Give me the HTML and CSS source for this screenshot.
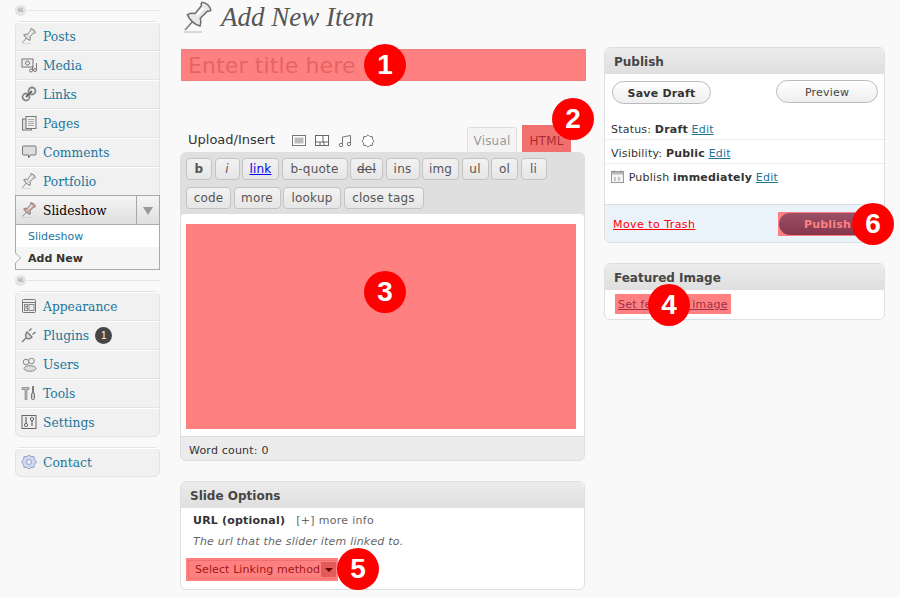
FILE: index.html
```html
<!DOCTYPE html>
<html lang="en">
<head>
    <meta charset="UTF-8">
    <title>Add New Item</title>
    <link rel="stylesheet" href="styles.css">
</head>
<body>

<svg class="defs" width="0" height="0">
    <symbol id="pin" viewBox="0 0 32 32">
        <path d="M2 31 H20" stroke="#ccc" stroke-width="1.500" fill="none"/>
        <g transform="translate(3 29) rotate(42)">
            <path d="M0 0 V-13" stroke="#888" stroke-width="1.800" fill="none"/>
            <path d="M-8.500 -13 Q0 -9 8.500 -13 Q7 -17 3.500 -19 L4 -29 Q6 -30 6 -32 Q0 -36 -6 -32 Q-6 -30 -4 -29 L-3.500 -19 Q-7 -17 -8.500 -13Z" fill="currentColor" stroke="#6e6e6e" stroke-width="1.500"/>
            <path d="M-1 -29 V-19" stroke="#fff" stroke-width="2" fill="none"/>
        </g>
    </symbol>
</svg>

<div class="page">

<aside class="sidebar">
    <div class="sep"><span class="sep-btn">«</span></div>
    <ul class="menu">
        <li><svg class="ico"><use href="#pin"/></svg><a href="#">Posts</a></li>
        <li><svg class="ico" viewBox="0 0 16 16"><rect x="1" y="2" width="11" height="8" fill="#eee" stroke="#777"/><circle cx="6.500" cy="6" r="2" fill="none" stroke="#777"/><circle cx="10" cy="13.500" r="1.500" fill="none" stroke="#777"/><circle cx="14" cy="13" r="1.500" fill="none" stroke="#777"/><path d="M11.500 13V9M15.500 13V6" stroke="#777"/></svg><a href="#">Media</a></li>
        <li><svg class="ico" viewBox="0 0 16 16"><circle cx="5" cy="11" r="3.500" fill="none" stroke="#888" stroke-width="1.800"/><circle cx="11" cy="5" r="3.500" fill="none" stroke="#888" stroke-width="1.800"/><path d="M5 11 L11 5" stroke="#666" stroke-width="1.800"/></svg><a href="#">Links</a></li>
        <li><svg class="ico" viewBox="0 0 16 16"><rect x="1.500" y="4" width="9" height="11" fill="#ddd" stroke="#777"/><rect x="5" y="1.500" width="10" height="12" fill="#f0f0f0" stroke="#777"/><path d="M7 4.500h6M7 6.500h6M7 8.500h6M7 10.500h6" stroke="#aaa"/></svg><a href="#">Pages</a></li>
        <li><svg class="ico" viewBox="0 0 16 16"><path d="M2.500 2 H14 Q15 2 15 3 V10 Q15 11 14 11 H9.500 L7.500 14 V11 H2.500 Q1.500 11 1.500 10 V3 Q1.500 2 2.500 2 Z" fill="#ddd" stroke="#777"/></svg><a href="#">Comments</a></li>
        <li><svg class="ico"><use href="#pin"/></svg><a href="#">Portfolio</a></li>
        <li class="menu-open">
            <div class="open-head">
                <svg class="ico ico-red"><use href="#pin"/></svg><span class="open-title">Slideshow</span>
                <span class="open-arrow"></span>
            </div>
            <ul class="submenu">
                <li><a href="#">Slideshow</a></li>
                <li class="current">Add New</li>
            </ul>
        </li>
    </ul>
    <div class="sep sep-mid"><span class="sep-btn">«</span></div>
    <ul class="menu">
        <li><svg class="ico" viewBox="0 0 16 16"><rect x="1.500" y="1.500" width="13" height="13" rx="1" fill="#eee" stroke="#777"/><path d="M1.500 4.500h13" stroke="#777"/><rect x="3.500" y="6.500" width="3" height="2" fill="none" stroke="#888"/><rect x="3.500" y="10" width="3" height="2.500" fill="none" stroke="#888"/><rect x="8" y="6.500" width="5" height="6" fill="none" stroke="#888"/></svg><a href="#">Appearance</a></li>
        <li><svg class="ico" viewBox="0 0 16 16"><path d="M1 15 L5 11 M6 5 L11 10 Q8 13 5.500 11 Q3.500 8 6 5 Z M8 4 L10.500 1.500 M11.500 7.500 L14.500 5" fill="#ddd" stroke="#777" stroke-width="1.300"/></svg><a href="#">Plugins</a><span class="count">1</span></li>
        <li><svg class="ico" viewBox="0 0 16 16"><circle cx="5" cy="6" r="2.800" fill="#eee" stroke="#888"/><circle cx="10.500" cy="5" r="2.800" fill="#eee" stroke="#888"/><ellipse cx="9" cy="12.500" rx="6" ry="2.800" fill="#ddd" stroke="#888"/></svg><a href="#">Users</a></li>
        <li><svg class="ico" viewBox="0 0 16 16"><path d="M1 2.500h7v2H6v10H4v-10H1z" fill="#bbb" stroke="#777" stroke-width=".6"/><path d="M12 1v7" stroke="#555" stroke-width="1.500"/><rect x="10.500" y="8" width="3" height="6.500" rx="1" fill="#ccc" stroke="#777"/></svg><a href="#">Tools</a></li>
        <li><svg class="ico" viewBox="0 0 16 16"><rect x="1" y="1.500" width="14" height="13" fill="#eee" stroke="#666"/><path d="M5 3v6M11 7v5" stroke="#666" stroke-width="1.200"/><circle cx="5" cy="11" r="1.600" fill="none" stroke="#666"/><circle cx="11" cy="5" r="1.600" fill="none" stroke="#666"/></svg><a href="#">Settings</a></li>
    </ul>
    <ul class="menu menu-last">
        <li><svg class="ico" viewBox="0 0 16 16"><path d="M8 1 L10 2.500 L13 2.500 L13.500 5.500 L15.500 8 L13.500 10.500 L13 13.500 L10 13.500 L8 15 L6 13.500 L3 13.500 L2.500 10.500 L.5 8 L2.500 5.500 L3 2.500 L6 2.500 Z" fill="#cfd8ec" stroke="#97a6cc"/><circle cx="8" cy="8" r="2.500" fill="#eef" stroke="#97a6cc"/></svg><a href="#">Contact</a></li>
    </ul>
</aside>

<main class="content">
    <div class="heading">
        <svg class="heading-ico"><use href="#pin"/></svg>
        <h2>Add New Item</h2>
    </div>

    <div class="columns">
        <div class="col-main">
            <div class="title-input">Enter title here</div>

            <div class="editor-top">
                <span class="upload">Upload/Insert</span>
                <svg class="media-ico" viewBox="0 0 14 14"><rect x=".5" y="1.500" width="13" height="10" fill="#fff" stroke="#777"/><rect x="2.500" y="3.500" width="9" height="6" fill="#bbb"/></svg>
                <svg class="media-ico" viewBox="0 0 14 14"><rect x=".5" y="1.500" width="13" height="10" fill="#fff" stroke="#666"/><path d="M.5 8h13M5 8v4M9 8v4M8 1.500v7" stroke="#666"/></svg>
                <svg class="media-ico" viewBox="0 0 14 14"><path d="M4.500 11V3L12.500 1.500V10" fill="none" stroke="#777"/><circle cx="3" cy="11" r="1.700" fill="none" stroke="#777"/><circle cx="11" cy="10" r="1.700" fill="none" stroke="#777"/></svg>
                <svg class="media-ico" viewBox="0 0 14 14"><path d="M7 .8 L8.800 2.600 L11.400 2.600 L11.400 5.200 L13.200 7 L11.400 8.800 L11.400 11.400 L8.800 11.400 L7 13.200 L5.200 11.400 L2.600 11.400 L2.600 8.800 L.8 7 L2.600 5.200 L2.600 2.600 L5.200 2.600 Z" fill="#fff" stroke="#777"/></svg>
                <span class="tab tab-visual">Visual</span>
                <span class="tab tab-html">HTML</span>
            </div>

            <div class="editor">
                <div class="quicktags">
                    <span class="qt qt-b">b</span>
                    <span class="qt qt-i">i</span>
                    <span class="qt qt-link">link</span>
                    <span class="qt qt-quote">b-quote</span>
                    <span class="qt qt-del">del</span>
                    <span class="qt qt-ins">ins</span>
                    <span class="qt qt-img">img</span>
                    <span class="qt qt-ul">ul</span>
                    <span class="qt qt-ul">ol</span>
                    <span class="qt qt-li">li</span>
                    <span class="qt qt-code">code</span>
                    <span class="qt qt-more">more</span>
                    <span class="qt qt-lookup">lookup</span>
                    <span class="qt qt-close">close tags</span>
                </div>
                <div class="editor-area"><div class="red-area"></div></div>
                <div class="word-count">Word count: 0</div>
            </div>

            <div class="box box-slide">
                <h3>Slide Options</h3>
                <div class="slide-body">
                    <div class="url-row"><strong>URL (optional)</strong><span class="more-info">[+] more info</span></div>
                    <p class="hint">The url that the slider item linked to.</p>
                    <div class="select-mark"><span class="select-text">Select Linking method</span><span class="select-btn"></span></div>
                </div>
            </div>
        </div>

        <div class="col-side">
            <div class="box">
                <h3>Publish</h3>
                <div class="pub-buttons">
                    <span class="pill pill-save">Save Draft</span>
                    <span class="pill pill-preview">Preview</span>
                </div>
                <div class="pub-row">Status: <strong>Draft</strong> <a href="#">Edit</a></div>
                <div class="pub-row">Visibility: <strong>Public</strong> <a href="#">Edit</a></div>
                <div class="pub-row pub-date">
                    <svg class="cal" viewBox="0 0 13 13"><rect x=".5" y="1.500" width="12" height="11" fill="#f4f4f4" stroke="#999"/><rect x="1" y="2" width="11" height="2.500" fill="#bbb"/><path d="M3 .5v2M10 .5v2" stroke="#888"/><path d="M4 7v4M8 7v4" stroke="#999"/></svg>
                    Publish <strong>immediately</strong> <a href="#">Edit</a>
                </div>
                <div class="pub-actions">
                    <a class="trash" href="#">Move to Trash</a>
                    <div class="publish-mark"><span class="publish-btn">Publish</span></div>
                </div>
            </div>

            <div class="box box-featured">
                <h3>Featured Image</h3>
                <div class="featured-body"><a class="featured-link" href="#">Set featured image</a></div>
            </div>
        </div>
    </div>
</main>

<span class="num num-1">1</span>
<span class="num num-2">2</span>
<span class="num num-3">3</span>
<span class="num num-4">4</span>
<span class="num num-5">5</span>
<span class="num num-6">6</span>

</div>

</body>
</html>
```

FILE: styles.css
```css
html, body {
    margin: 0;
    padding: 0;
    height: 598px;
    overflow: hidden;
}
body {
    background-color: #f9f9f9;
    font-family: "DejaVu Sans", sans-serif;
    font-size: 11px;
    letter-spacing: .2px;
    color: #333;
}
a {
    color: #21759b;
}
ul {
    list-style: none;
    margin: 0;
    padding: 0;
}
.defs {
    position: absolute;
}
.page {
    position: relative;
    display: flex;
    gap: 20px;
    width: 900px;
    height: 598px;
    padding-left: 15px;
    box-sizing: border-box;
}

/* left menu */
.sidebar {
    width: 145px;
    flex: none;
}
.sep {
    height: 21px;
    display: flex;
    align-items: center;
}
.sep::after {
    content: "";
    flex: 1;
    height: 1px;
    background-color: #e6e6e6;
}
.sep-btn {
    width: 11px;
    height: 11px;
    border-radius: 50%;
    background-color: #e4e4e4;
    color: #999;
    font-family: "Liberation Sans", sans-serif;
    font-size: 11px;
    line-height: 9px;
    letter-spacing: 0;
    text-align: center;
}
.menu {
    border: 1px solid #e3e3e3;
    border-radius: 6px;
    background-color: #f1f1f1;
}
.menu > li {
    display: flex;
    align-items: center;
    height: 28px;
    border-bottom: 1px solid #e3e3e3;
    box-shadow: inset 0 1px 0 #fff;
    padding-left: 5px;
    font-family: "DejaVu Serif", serif;
    font-size: 12.3px;
    letter-spacing: 0;
}
.menu > li:last-child {
    border-bottom: 0;
}
.menu a {
    text-decoration: none;
}
.menu > li > a,
.open-title {
    padding-top: 2px;
}
.ico {
    width: 16px;
    height: 16px;
    margin-right: 6px;
    flex: none;
    color: #dcdcdc;
}
.ico-red {
    color: #d9a5a5;
}
.count {
    background-color: #464646;
    color: #fff;
    font-family: "Liberation Sans", sans-serif;
    font-size: 10px;
    width: 17px;
    height: 17px;
    line-height: 17px;
    border-radius: 50%;
    text-align: center;
    margin-left: 6px;
}
.menu > .menu-open,
.menu > .menu-open:last-child {
    display: block;
    height: auto;
    padding: 0;
    margin: -1px -1px -1px;
    border: 1px solid #a9a9a9;
    box-shadow: none;
    background-color: #fff;
}
.open-head {
    display: flex;
    align-items: center;
    height: 28px;
    padding-left: 5px;
    background: linear-gradient(#f5f5f5, #dfdfdf);
    border-bottom: 1px solid #a9a9a9;
}
.open-title {
    flex: 1;
    color: #000;
}
.open-arrow {
    width: 22px;
    height: 28px;
    border-left: 1px solid #a9a9a9;
    position: relative;
}
.open-arrow::after {
    content: "";
    position: absolute;
    left: 6px;
    top: 11px;
    border: 5px solid transparent;
    border-top: 8px solid #999;
    border-bottom: 0;
}
.submenu {
    font-family: "DejaVu Sans", sans-serif;
    font-size: 11px;
}
.submenu li {
    height: 22px;
    line-height: 24px;
    padding-left: 12px;
}
.submenu .current {
    position: relative;
    background-color: #f5f5f5;
    font-weight: bold;
    color: #333;
    letter-spacing: 0;
}
.submenu .current::before,
.submenu .current::after {
    content: "";
    position: absolute;
    left: -1px;
    top: 5px;
    border: 6px solid transparent;
    border-left: 6px solid #a9a9a9;
    border-right: 0;
}
.submenu .current::after {
    left: -2px;
    border-left-color: #f9f9f9;
}
.menu-last {
    margin-top: 10px;
}

/* main */
.content {
    flex: 1;
    min-width: 0;
}
.heading {
    display: flex;
    align-items: center;
    height: 34px;
    margin-left: 2px;
    margin-bottom: 15px;
}
.heading-ico {
    width: 32px;
    height: 32px;
    margin-right: 7px;
    color: #e8e8e8;
}
.heading h2 {
    margin: 0;
    font-family: "Liberation Serif", serif;
    font-style: italic;
    font-weight: normal;
    font-size: 27px;
    letter-spacing: 0;
    color: #555;
}
.columns {
    display: flex;
    gap: 19px;
}
.col-main {
    width: 405px;
}
.col-side {
    width: 281px;
    margin-top: -2px;
}
.title-input {
    width: 405px;
    height: 32px;
    margin-left: 1px;
    background-color: #ff8080;
    border: 1px solid #f08080;
    box-sizing: border-box;
    color: #e66464;
    font-size: 22px;
    letter-spacing: .12px;
    line-height: 32px;
    padding-left: 6px;
}
.editor-top {
    display: flex;
    align-items: flex-end;
    height: 46px;
    margin-top: 25px;
    padding: 0 14px 0 8px;
}
.upload {
    font-size: 13px;
    letter-spacing: 0;
    margin-bottom: 5px;
    margin-right: 17px;
    color: #333;
}
.media-ico {
    width: 14px;
    height: 14px;
    margin-right: 9px;
    margin-bottom: 4px;
}
.tab {
    font-size: 12px;
    text-align: center;
    box-sizing: border-box;
}
.tab-visual {
    margin-left: auto;
    width: 50px;
    height: 25px;
    line-height: 27px;
    color: #999;
    background-color: #f4f4f4;
    border: 1px solid #dfdfdf;
    border-bottom: 0;
    border-radius: 3px 3px 0 0;
}
.tab-html {
    margin-left: 5px;
    width: 49px;
    height: 27px;
    line-height: 33px;
    color: #b02a2a;
    background-color: #f07070;
}
.editor {
    border: 1px solid #dfdfdf;
    border-radius: 6px;
    background-color: #ececec;
    overflow: hidden;
}
.quicktags {
    display: flex;
    flex-wrap: wrap;
    gap: 7px 2.5px;
    align-content: flex-start;
    height: 61px;
    padding: 5px 5px 0;
    box-sizing: border-box;
    background-color: #dfdfdf;
}
.qt {
    height: 22px;
    line-height: 21px;
    box-sizing: border-box;
    border: 1px solid #c3c3c3;
    border-radius: 4px;
    background: linear-gradient(#f2f2f2, #e6e6e6);
    font-size: 12px;
    text-align: center;
    color: #555;
}
.qt-b {
    font-weight: bold;
    width: 26px;
}
.qt-i {
    font-style: italic;
    width: 25px;
}
.qt-link {
    width: 37px;
    color: #00e;
    text-decoration: underline;
}
.qt-quote { width: 66px; }
.qt-del {
    width: 33px;
    text-decoration: line-through;
}
.qt-ins { width: 34px; }
.qt-img { width: 37px; }
.qt-ul { width: 27px; }
.qt-li { width: 26px; }
.qt-code { width: 45px; }
.qt-more { width: 47px; }
.qt-lookup { width: 58px; }
.qt-close { width: 80px; }
.editor-area {
    background-color: #fff;
    height: 223px;
    padding: 10px 8px 7px 5px;
    box-sizing: border-box;
    border-radius: 5px 5px 0 0;
    border-bottom: 1px solid #dfdfdf;
}
.red-area {
    height: 100%;
    background-color: #ff8080;
}
.word-count {
    height: 23px;
    line-height: 27px;
    padding-left: 8px;
    color: #333;
}

/* boxes */
.box {
    border: 1px solid #dfdfdf;
    border-radius: 6px;
    background-color: #fff;
    overflow: hidden;
}
.box h3 {
    margin: 0;
    height: 26px;
    line-height: 28px;
    padding-left: 9px;
    font-size: 12px;
    letter-spacing: 0;
    color: #464646;
    background: linear-gradient(#ececec, #dfdfdf);
}
.box-slide {
    margin-top: 20px;
}
.slide-body {
    height: 81px;
    padding: 5px 0 0 12px;
    box-sizing: border-box;
}
.url-row {
    line-height: 15px;
    color: #333;
}
.more-info {
    margin-left: 11px;
    letter-spacing: .3px;
    color: #666;
}
.hint {
    margin: 6px 0 0;
    line-height: 15px;
    font-style: italic;
    color: #666;
}
.select-mark {
    display: flex;
    align-items: center;
    width: 152px;
    height: 23px;
    margin: 9px 0 0 -7px;
    background-color: #ff8080;
    padding-left: 9px;
    box-sizing: border-box;
    color: #a01818;
    outline: 1px solid #f07070;
    outline-offset: -3px;
}
.select-text {
    flex: 1;
    letter-spacing: .1px;
}
.select-btn {
    width: 15px;
    height: 15px;
    margin-right: 2px;
    background-color: #e25a5a;
    position: relative;
}
.select-btn::after {
    content: "";
    position: absolute;
    left: 4px;
    top: 6px;
    border: 4px solid transparent;
    border-top: 4px solid #600;
    border-bottom: 0;
}
.pub-buttons {
    display: flex;
    justify-content: space-between;
    align-items: flex-start;
    padding: 6px 6px 0 7px;
    height: 42px;
    box-sizing: border-box;
}
.pill {
    height: 23px;
    line-height: 23px;
    border: 1px solid #bbb;
    border-radius: 12px;
    box-sizing: border-box;
    text-align: center;
    background: linear-gradient(#fff, #eee);
}
.pill-save {
    width: 99px;
    margin-top: 1px;
    font-weight: bold;
}
.pill-preview {
    width: 102px;
    color: #464646;
}
.pub-row {
    height: 24px;
    line-height: 28px;
    padding-left: 6px;
    border-bottom: 1px solid #eee;
    box-sizing: border-box;
    color: #333;
}
.pub-date {
    height: 40px;
    border-bottom: 0;
}
.cal {
    width: 13px;
    height: 13px;
    vertical-align: -2px;
    margin-right: 1px;
}
.pub-actions {
    display: flex;
    align-items: center;
    justify-content: space-between;
    height: 37px;
    background-color: #eaf2fa;
    border-top: 1px solid #dfdfdf;
    padding-left: 8px;
}
.trash {
    color: #f00;
    letter-spacing: .45px;
    padding-top: 2px;
}
.publish-mark {
    width: 90px;
    height: 24px;
    background-color: #ff8080;
    padding: 1px 0 1px 1px;
    box-sizing: border-box;
    margin-right: 16px;
}
.publish-btn {
    display: block;
    height: 22px;
    line-height: 23px;
    border-radius: 11px;
    background: linear-gradient(#9a5068, #86364c);
    color: #ff8080;
    font-weight: bold;
    padding-left: 25px;
}
.box-featured {
    margin-top: 20px;
}
.featured-body {
    height: 29px;
    padding: 4px 0 0 10px;
    box-sizing: border-box;
}
.featured-link {
    display: inline-block;
    height: 20px;
    line-height: 21px;
    padding: 0 3px;
    background-color: #ff8080;
    color: #9c3048;
}

/* numbered markers */
.num {
    position: absolute;
    width: 42px;
    height: 42px;
    border-radius: 50%;
    background-color: #f00;
    color: #fff;
    font-family: "Liberation Sans", sans-serif;
    font-weight: bold;
    font-size: 28px;
    letter-spacing: 0;
    line-height: 42px;
    text-align: center;
}
.num-1 { left: 364px; top: 44px; }
.num-2 { left: 552px; top: 98px; }
.num-3 { left: 364px; top: 271px; }
.num-4 { left: 648px; top: 284px; }
.num-5 { left: 337px; top: 548px; }
.num-6 { left: 852px; top: 203px; }
```
